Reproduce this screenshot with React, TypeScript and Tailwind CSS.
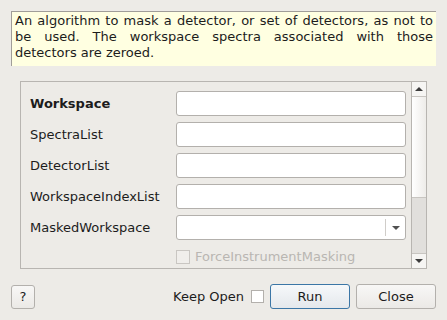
import React from 'react';

const font = { fontFamily: "'DejaVu Sans', sans-serif" };

function TextField() {
  return <div className="h-[25px] w-[230px] rounded-[3px] border border-[#b3b0ac] bg-white" />;
}

function ComboField() {
  return (
    <div className="flex h-[25px] w-[230px] rounded-[3px] border border-[#b3b0ac] bg-white">
      <div className="flex-1" />
      <div className="my-[3px] w-px bg-[#d0cdc9]" />
      <div className="flex w-[19px] items-center justify-center">
        <div className="h-0 w-0 border-x-[4px] border-t-[4px] border-x-transparent border-t-[#505050]" />
      </div>
    </div>
  );
}

function Row({ label, bold, combo }: { label: string; bold?: boolean; combo?: boolean }) {
  return (
    <div className="flex h-[25px] items-center">
      <div className={`w-[146px] text-[13px] text-[#1c1c1c] ${bold ? 'font-bold' : ''}`}>{label}</div>
      {combo ? <ComboField /> : <TextField />}
    </div>
  );
}

function Scrollbar() {
  return (
    <div className="flex w-[15px] flex-col border-l border-[#b8b5b1]">
      <div className="flex h-[15px] items-center justify-center border-b border-[#c8c5c1] bg-[#f6f5f3]">
        <div className="h-0 w-0 border-x-[4px] border-b-[4px] border-x-transparent border-b-[#3c3c3c]" />
      </div>
      <div className="h-[101px] border-b border-[#c8c5c1] bg-gradient-to-r from-white to-[#eeece9]" />
      <div className="flex-1 bg-[#e1dfdc]" />
      <div className="flex h-[15px] items-center justify-center border-t border-[#c8c5c1] bg-[#f6f5f3]">
        <div className="h-0 w-0 border-x-[4px] border-t-[4px] border-x-transparent border-t-[#3c3c3c]" />
      </div>
    </div>
  );
}

export default function App() {
  return (
    <div className="flex h-[320px] w-[447px] flex-col bg-[#edebe7] text-[#1c1c1c]" style={font}>
      {/* Description */}
      <div className="ml-[11px] mt-[11px] h-[55px] w-[425px] border-l border-t border-[#a09d99] bg-[#ffffe1] px-[3px] pt-[1px] text-justify text-[13px] leading-[16px]">
        An algorithm to mask a detector, or set of detectors, as not to be used. The workspace spectra associated with those detectors are zeroed.
      </div>

      {/* Properties */}
      <div className="ml-[20px] mt-[15px] flex h-[188px] w-[407px] overflow-hidden border border-[#b8b5b1]">
        <div className="flex flex-1 flex-col gap-[6px] overflow-hidden pl-[9px] pt-[9px]">
          <Row label="Workspace" bold />
          <Row label="SpectraList" />
          <Row label="DetectorList" />
          <Row label="WorkspaceIndexList" />
          <Row label="MaskedWorkspace" combo />
          <div className="flex h-[22px] shrink-0 items-center pl-[146px]">
            <div className="h-[14px] w-[14px] border border-[#c9c6c2] bg-[#f0eeeb]" />
            <span className="ml-[5px] text-[13px] text-[#b9b6b2]">ForceInstrumentMasking</span>
          </div>
        </div>
        <Scrollbar />
      </div>

      {/* Buttons */}
      <div className="mt-[15px] flex items-center px-[11px]">
        <button className="h-[24px] w-[24px] rounded-[3px] border border-[#b3b0ac] bg-gradient-to-b from-[#f8f7f6] to-[#ebe9e6] text-[13px]">
          ?
        </button>
        <div className="flex-1" />
        <span className="text-[13px]">Keep Open</span>
        <div className="ml-[7px] h-[13px] w-[13px] border border-[#b3b0ac] bg-white" />
        <button className="ml-[6px] h-[25px] w-[80px] rounded-[3px] border border-[#3b76a6] bg-gradient-to-b from-[#f6f8fa] to-[#e4e8ec] text-[13px]">
          Run
        </button>
        <button className="ml-[6px] h-[25px] w-[80px] rounded-[3px] border border-[#b3b0ac] bg-gradient-to-b from-[#f8f7f6] to-[#ebe9e6] text-[13px]">
          Close
        </button>
      </div>
    </div>
  );
}
